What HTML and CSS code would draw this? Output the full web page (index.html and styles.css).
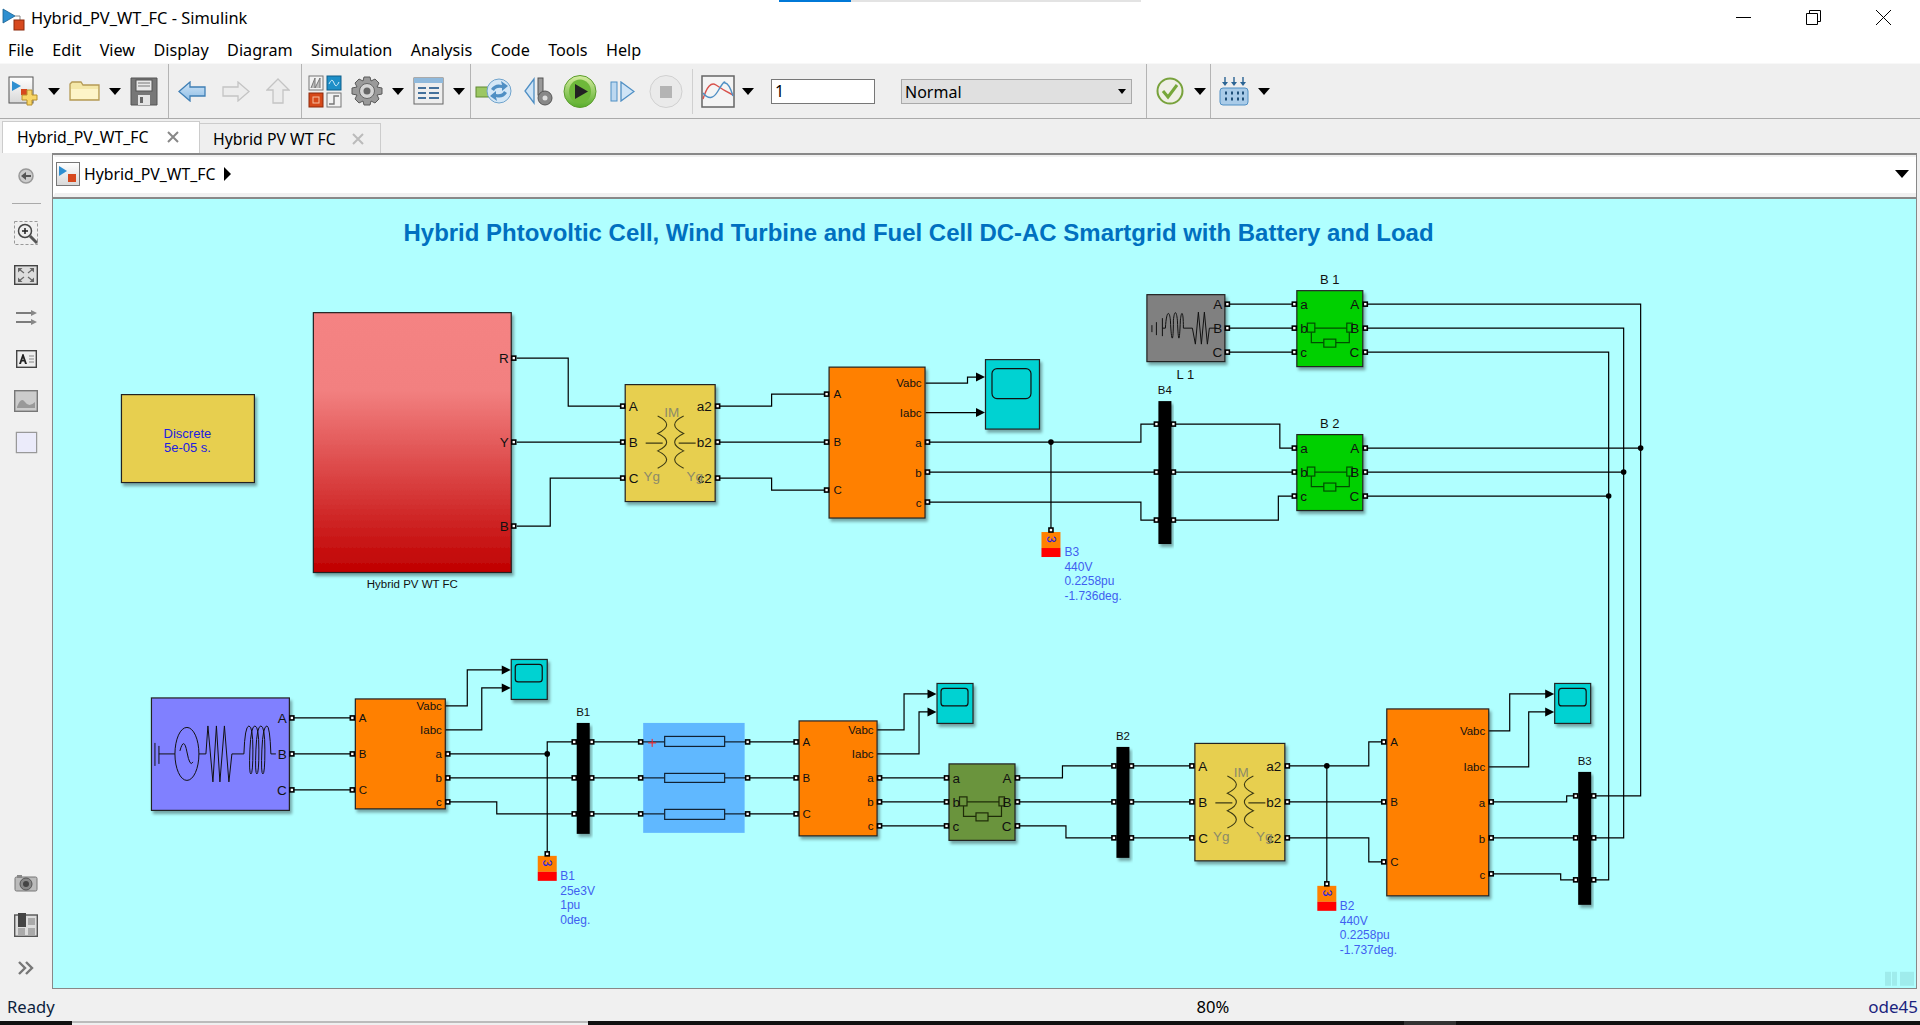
FILE: index.html
```html
<!doctype html>
<html>
  <head>
    <meta charset="utf-8">
    <title>Hybrid_PV_WT_FC - Simulink</title>
    <link rel="stylesheet" href="styles.css">
  </head>

  <body>
    <svg class="defs" width="0" height="0">
      <defs>
        <filter id="shade" x="-10%" y="-10%" width="130%" height="130%">
          <feDropShadow dx="2" dy="3" stdDeviation="1.6" flood-color="#000" flood-opacity="0.35"/>
        </filter>
        <linearGradient id="pvFill" x1="0" y1="0" x2="0" y2="1">
          <stop offset="0" stop-color="#f58383"/>
          <stop offset="0.3" stop-color="#f28080"/>
          <stop offset="1" stop-color="#c00000"/>
        </linearGradient>
        <linearGradient id="btnFill" x1="0" y1="0" x2="0" y2="1">
          <stop offset="0" stop-color="#ffffff"/>
          <stop offset="1" stop-color="#d8d8d8"/>
        </linearGradient>
        <linearGradient id="playFill" x1="0" y1="0" x2="0" y2="1">
          <stop offset="0" stop-color="#d5eca0"/>
          <stop offset="1" stop-color="#58ad2c"/>
        </linearGradient>
        <linearGradient id="blueArrow" x1="0" y1="0" x2="0" y2="1">
          <stop offset="0" stop-color="#cfe4f6"/>
          <stop offset="1" stop-color="#8dbde6"/>
        </linearGradient>
        <g id="port"><rect x="-2" y="-2" width="4" height="4" fill="#fff" stroke="#000" stroke-width="1.6"/></g>
        <polygon id="arrow" points="-9,-4.5 0,0 -9,4.5" fill="#000"/>
        <g id="breaker" fill="none" stroke="currentColor" stroke-width="1.2">
          <rect x="10.5" y="33" width="7.5" height="9"/>
          <rect x="50" y="33" width="5.5" height="9"/>
          <path d="M18 38H50M14.5 42V52.5H27M39 52.5H52.5V42"/>
          <rect x="27" y="49" width="12" height="8"/>
        </g>
        <g id="xfmrCoil" fill="none" stroke="#3c3a14" stroke-width="1.1">
          <path d="M32 32q18 8.700 0 17.400q18 8.700 0 17.400q18 8.700 0 17.400"/>
          <path d="M58 32q-18 8.700 0 17.400q-18 8.700 0 17.400q-18 8.700 0 17.400"/>
          <path d="M20 59H37M53 59H70"/>
        </g>
        <symbol id="modelMark" viewBox="0 0 24 24">
          <path d="M1 2L13 9L1 16Z" fill="#2f8fd0" stroke="#16608f" stroke-width="0.8"/>
          <path d="M13 9H18V13" fill="none" stroke="#888"/>
          <rect x="12" y="13" width="10" height="10" fill="#d7491e" stroke="#8c2a0c"/>
        </symbol>
      </defs>
    </svg>

    <header class="titlebar">
      <div class="loadbar"><span class="loadbar-fill"></span></div>
      <svg class="title-icon"><use href="#modelMark"/></svg>
      <span class="title-text">Hybrid_PV_WT_FC - Simulink</span>
      <div class="window-btns">
        <svg class="win-btn" viewBox="0 0 15 15"><path d="M0 7.500H15" stroke="#000" fill="none"/></svg>
        <svg class="win-btn" viewBox="0 0 15 15"><path d="M3.500 3V.5H14.500V11.500H12M.5 3.500H11.500V14.500H.5Z" stroke="#000" fill="none"/></svg>
        <svg class="win-btn" viewBox="0 0 15 15"><path d="M0 0L15 15M15 0L0 15" stroke="#000" fill="none"/></svg>
      </div>
    </header>

    <nav class="menubar">
      <span>File</span><span>Edit</span><span>View</span><span>Display</span><span>Diagram</span><span>Simulation</span><span>Analysis</span><span>Code</span><span>Tools</span><span>Help</span>
    </nav>

    <section class="toolbar">
      <div class="tool-group group-file">
        <svg class="ic ic-new" viewBox="0 0 31 30">
          <rect x="1" y="1" width="24" height="26" fill="url(#btnFill)" stroke="#555"/>
          <path d="M4 5L13 10L4 15Z" fill="#2f8fd0"/>
          <rect x="13" y="13" width="6" height="6" fill="#d7491e"/>
          <path d="M19 14h5v5h5v5h-5v5h-5v-5h-5v-5h5z" fill="#f8d667" stroke="#b8902a"/>
        </svg>
        <i class="caret"></i>
        <svg class="ic ic-folder" viewBox="0 0 31 20">
          <path d="M1 3V19H30V4H14L12 1H3Z" fill="#f4e7a8" stroke="#b59a55" stroke-width="1.3"/>
          <path d="M2 8H29V18H2Z" fill="#fdf4c8"/>
        </svg>
        <i class="caret"></i>
        <svg class="ic ic-save" viewBox="0 0 28 29">
          <path d="M1 1H27V28H1Z" fill="#777" stroke="#555"/>
          <rect x="6" y="3" width="16" height="11" fill="#e8e8e8" stroke="#555"/>
          <path d="M8 6H20M8 9H20" stroke="#777"/>
          <rect x="8" y="18" width="12" height="10" fill="#e4e4e4"/>
          <rect x="10" y="20" width="3" height="6" fill="#666"/>
        </svg>
      </div>

      <div class="tool-group group-nav">
        <svg class="ic ic-nav" viewBox="0 0 28 21"><path d="M1 10.500L12 1V6H27V15H12V20Z" fill="url(#blueArrow)" stroke="#3f7fb5" stroke-width="1.3"/></svg>
        <svg class="ic ic-nav" viewBox="0 0 28 21"><path d="M27 10.500L16 1V6H1V15H16V20Z" fill="#ececec" stroke="#c4c4c4" stroke-width="1.3"/></svg>
        <svg class="ic ic-up" viewBox="0 0 24 26"><path d="M12 1L23 12H17V25H7V12H1Z" fill="#ececec" stroke="#c4c4c4" stroke-width="1.3"/></svg>
      </div>

      <div class="tool-group group-lib">
        <svg class="ic ic-lib" viewBox="0 0 34 33">
          <rect x="1" y="1" width="14" height="14" fill="#f2f2f2" stroke="#777"/>
          <path d="M3 13L7 3V13M7 13L12 3V13" fill="#bbb" stroke="#777"/>
          <rect x="19" y="1" width="14" height="14" fill="#1e8fc8" stroke="#0e5f8a"/>
          <path d="M21 9Q24 2 26 8T31 7" fill="none" stroke="#cfeaf8"/>
          <rect x="1" y="18" width="14" height="14" fill="#d6491a" stroke="#8c2a0c"/>
          <rect x="5" y="22" width="6" height="6" fill="none" stroke="#f6c0a0"/>
          <rect x="19" y="18" width="14" height="14" fill="#f2f2f2" stroke="#777"/>
          <path d="M21 29H26V21H31" fill="none" stroke="#777" stroke-width="1.4"/>
        </svg>
        <svg class="ic ic-gear" viewBox="0 0 32 30">
          <path d="M13 1H19L20 5L24 3L28 7L26 11L31 12V18L26 19L28 23L24 27L20 25L19 29H13L12 25L8 27L4 23L6 19L1 18V12L6 11L4 7L8 3L12 5Z" fill="#9a9a9a" stroke="#5a5a5a"/>
          <circle cx="16" cy="15" r="7.500" fill="#d4d4d4" stroke="#666"/>
          <circle cx="16" cy="15" r="3.500" fill="#666"/>
        </svg>
        <i class="caret"></i>
        <svg class="ic ic-config" viewBox="0 0 31 28">
          <rect x="1" y="1" width="29" height="26" fill="#eee" stroke="#666"/>
          <rect x="1" y="1" width="29" height="5" fill="#8fb9dc"/>
          <path d="M5 11H13M16 11H26M5 16H13M16 16H26M5 21H13M16 21H26" stroke="#44719c" stroke-width="2"/>
        </svg>
        <i class="caret"></i>
      </div>

      <div class="tool-group group-sim">
        <svg class="ic ic-restart" viewBox="0 0 37 28">
          <rect x="1" y="10" width="14" height="10" fill="#9cc763" stroke="#618a33"/>
          <circle cx="24" cy="14" r="12" fill="#d4e7f6" stroke="#6fa3cc"/>
          <path d="M16 12Q20 6 27 8L26 4L33 9L27 14V11Q21 10 19 14ZM32 16Q28 22 21 20L22 24L15 19L21 14V17Q27 18 29 14Z" fill="#4f8fc4"/>
        </svg>
        <svg class="ic ic-stepback" viewBox="0 0 30 29">
          <path d="M10 2L1 14L10 26Z" fill="#cfe4f6" stroke="#4f8fc4" stroke-width="1.3"/>
          <rect x="14" y="1" width="5" height="17" fill="#999" stroke="#555"/>
          <circle cx="21" cy="21" r="7" fill="#888" stroke="#555"/>
          <circle cx="21" cy="21" r="2.500" fill="#ddd"/>
        </svg>
        <svg class="ic ic-round" viewBox="0 0 34 33">
          <ellipse cx="17" cy="16.500" rx="16" ry="16" fill="url(#playFill)" stroke="#5b9d2c"/>
          <ellipse cx="17" cy="16.500" rx="11" ry="12" fill="#6eb83a"/>
          <path d="M12 9L25 16.500L12 24Z" fill="#222"/>
        </svg>
        <svg class="ic ic-stepfwd" viewBox="0 0 25 21">
          <rect x="1" y="1" width="6" height="19" fill="#bcd8f0" stroke="#4f8fc4"/>
          <path d="M11 1L24 10.500L11 20Z" fill="#cfe4f6" stroke="#4f8fc4" stroke-width="1.3"/>
        </svg>
        <svg class="ic ic-round ic-stop" viewBox="0 0 34 33">
          <circle cx="17" cy="16.500" r="16" fill="#eaeaea" stroke="#d0d0d0"/>
          <rect x="11" y="11" width="12" height="12" fill="#b4b4b4"/>
        </svg>
        <span class="tool-sep"></span>
        <svg class="ic ic-round ic-scope" viewBox="0 0 34 33">
          <rect x="1" y="1" width="32" height="31" fill="#f4f4f4" stroke="#666" stroke-width="1.5"/>
          <path d="M2 24Q8 5 15 10T32 20" fill="none" stroke="#d8524c" stroke-width="1.4"/>
          <path d="M2 18Q10 28 17 16T24 8Q28 8 32 21" fill="none" stroke="#4f8fc4" stroke-width="1.4"/>
        </svg>
        <i class="caret caret-scope"></i>
        <input class="stop-time" type="text" value="1">
        <div class="sim-mode"><span>Normal</span><i class="caret caret-small"></i></div>
      </div>

      <div class="tool-group group-check">
        <svg class="ic ic-check" viewBox="0 0 28 28">
          <circle cx="14" cy="14" r="12.500" fill="#efefe6" stroke="#78a23c" stroke-width="2"/>
          <path d="M7 14L12 20L21 8" fill="none" stroke="#77a73a" stroke-width="3"/>
        </svg>
        <i class="caret"></i>
      </div>

      <div class="tool-group group-grid">
        <svg class="ic ic-grid" viewBox="0 0 30 30">
          <path d="M6 1V7M15 1V7M24 1V7" stroke="#2b6494" stroke-width="1.4"/>
          <path d="M3 6H9L6 10ZM12 6H18L15 10ZM21 6H27L24 10Z" fill="#2b6494"/>
          <rect x="1" y="12" width="28" height="17" rx="3" fill="#a9cbe8" stroke="#4f8fc4"/>
          <path d="M6 17H8M12 17H14M18 17H20M23 17H25M6 23H8M12 23H14M18 23H20M23 23H25" stroke="#1f4f78" stroke-width="3"/>
        </svg>
        <i class="caret"></i>
      </div>
    </section>

    <div class="tabbar">
      <div class="tab tab-active"><span>Hybrid_PV_WT_FC</span><svg class="tab-x" viewBox="0 0 12 12"><path d="M1 1L11 11M11 1L1 11"/></svg></div>
      <div class="tab"><span>Hybrid PV WT FC</span><svg class="tab-x" viewBox="0 0 12 12"><path d="M1 1L11 11M11 1L1 11"/></svg></div>
    </div>

    <div class="workspace">
      <aside class="palette">
        <svg class="pal-back" viewBox="0 0 16 16">
          <circle cx="8" cy="8" r="7" fill="#ccc" stroke="#999" stroke-width="1.500"/>
          <path d="M3 8L8 4V7H13V9H8V12Z" fill="#555"/>
        </svg>
        <span class="pal-sep"></span>
        <svg class="pal-ic pal-zoom" viewBox="0 0 24 24">
          <rect x=".5" y=".5" width="23" height="23" fill="none" stroke="#999" stroke-dasharray="3 2"/>
          <circle cx="11" cy="10" r="6.500" fill="#eee" stroke="#444" stroke-width="1.500"/>
          <path d="M8 10H14M11 7V13" stroke="#222" stroke-width="1.500"/>
          <path d="M16 15L23 22" stroke="#555" stroke-width="3"/>
        </svg>
        <svg class="pal-ic pal-fit" viewBox="0 0 24 20">
          <rect x=".7" y=".7" width="22.600" height="18.600" fill="#ddd" stroke="#444" stroke-width="1.400"/>
          <path d="M4 3H8.500L4 7.500ZM20 3H15.500L20 7.500ZM4 17H8.500L4 12.500ZM20 17H15.500L20 12.500Z" fill="#666"/>
          <path d="M5 4L10 8M19 4L14 8M5 16L10 12M19 16L14 12" stroke="#666" stroke-width="1.200"/>
        </svg>
        <svg class="pal-ic pal-lines" viewBox="0 0 21 15">
          <path d="M0 3H18M0 12H18" stroke="#555" stroke-width="1.400"/>
          <path d="M15 0L21 3L15 6ZM15 9L21 12L15 15Z" fill="#888"/>
        </svg>
        <svg class="pal-ic pal-note" viewBox="0 0 21 18">
          <rect x=".7" y=".7" width="19.600" height="16.600" fill="#eee" stroke="#444" stroke-width="1.400"/>
          <path d="M3 14L6.500 4H7.500L11 14H9L8.200 11.500H5.800L5 14ZM6.400 10H7.600L7 8Z" fill="#222"/>
          <path d="M13 6H18M13 9H18M13 12H18" stroke="#888"/>
        </svg>
        <svg class="pal-ic pal-image" viewBox="0 0 24 22">
          <rect x=".7" y=".7" width="22.600" height="20.600" fill="#ccc" stroke="#777" stroke-width="1.400"/>
          <path d="M3 17Q7 6 11 12T21 12V18H3Z" fill="#999"/>
        </svg>
        <span class="pal-rect"></span>
        <span class="pal-fill"></span>
        <svg class="pal-ic pal-camera" viewBox="0 0 24 18">
          <rect x="1" y="3" width="22" height="14" rx="1.500" fill="#bbb" stroke="#777"/>
          <rect x="3" y="1" width="5" height="3" fill="#888"/>
          <circle cx="12" cy="10" r="6" fill="#888" stroke="#555"/>
          <circle cx="12" cy="10" r="3" fill="#444"/>
        </svg>
        <svg class="pal-ic pal-browser" viewBox="0 0 24 24">
          <rect x=".7" y="2" width="22.600" height="21.300" fill="#ddd" stroke="#555" stroke-width="1.400"/>
          <rect x="4" y="0" width="8" height="14" fill="#444"/>
          <rect x="4" y="15" width="7" height="7" fill="#aaa"/>
          <rect x="14" y="5" width="7" height="7" fill="#aaa"/>
          <rect x="14" y="15" width="7" height="7" fill="#aaa"/>
        </svg>
        <svg class="pal-ic pal-more" viewBox="0 0 16 14">
          <path d="M1 1L7 7L1 13M8 1L14 7L8 13" fill="none" stroke="#777" stroke-width="2.400"/>
        </svg>
      </aside>

      <main class="editor">
        <div class="crumbbar">
          <svg class="crumb-icon" viewBox="0 0 24 24">
            <rect x=".5" y=".5" width="23" height="23" fill="url(#btnFill)" stroke="#777"/>
            <path d="M3 4L11 9L3 14Z" fill="#2f8fd0"/>
            <rect x="12" y="12" width="8" height="8" fill="#d7491e"/>
          </svg>
          <span class="crumb-text">Hybrid_PV_WT_FC</span>
          <i class="crumb-next"></i>
          <i class="crumb-menu"></i>
        </div>

        <svg class="canvas" viewBox="53 199 1864 789">
          <text class="sheet-title" x="919" y="241">Hybrid Phtovoltic Cell, Wind Turbine and Fuel Cell DC-AC Smartgrid with Battery and Load</text>

          <!-- wires -->
          <g class="wires">
            <path d="M517 358H568.500V406H623M517 442H623M517 526H550.500V478H623"/>
            <path d="M718 406H772V394H827M718 442H827M718 478H772V490H827"/>
            <path d="M926 383H968V377H977M926 412.500H977"/>
            <path d="M928 442H1141.500V424H1157M928 472H1157M928 502H1141.500V520H1157M1051.500 442V528"/>
            <path d="M1174 424H1280.500V448H1295M1174 472H1295M1174 520H1279V496H1295"/>
            <path d="M1228 304H1295M1228 328H1295M1228 352H1295"/>
            <path d="M1366 304H1641.500V796H1595M1366 328H1624.500V838H1595M1366 352H1609.500V880H1595"/>
            <path d="M1366 448H1641.500M1366 472H1624.500M1366 496H1609.500"/>
            <path d="M292 718H352M292 754H352M292 790H352"/>
            <path d="M445 706H467.500V670H503M445 730H482V688H503"/>
            <path d="M448 754H547.500V742H574M448 778H574M448 802H497V814H574M547.500 754V853"/>
            <path d="M592 742H641M592 778H641M592 814H641"/>
            <path d="M748 742H796M748 778H796M748 814H796"/>
            <path d="M877 730H904.500V694H929M877 754H919.500V712H929"/>
            <path d="M880 778H947M880 802H947M880 826H947"/>
            <path d="M1018 778H1063V766H1114M1018 802H1114M1018 826H1066.500V838H1114"/>
            <path d="M1132 766H1192M1132 802H1192M1132 838H1192"/>
            <path d="M1288 766H1369.500V742H1385M1288 802H1385M1288 838H1369.500V862H1385M1327.500 766V883"/>
            <path d="M1489 731H1510.500V694H1547M1489 767H1529.500V712H1547"/>
            <path d="M1492 802H1567.500V796H1577M1492 838H1577M1492 874H1561.500V880H1577"/>
          </g>
          <g class="dots">
            <circle cx="1051.500" cy="442" r="2.800"/>
            <circle cx="1641.500" cy="448" r="2.800"/>
            <circle cx="1624.500" cy="472" r="2.800"/>
            <circle cx="1609.500" cy="496" r="2.800"/>
            <circle cx="547.500" cy="754" r="2.800"/>
            <circle cx="1327.500" cy="766" r="2.800"/>
          </g>

          <!-- powergui -->
          <rect class="block fill-yellow" x="121.500" y="394.500" width="133" height="88"/>
          <text class="lbl lbl-blue mid" x="187.500" y="438">Discrete</text>
          <text class="lbl lbl-blue mid" x="187.500" y="452">5e-05 s.</text>

          <!-- PV / WT / FC subsystem -->
          <rect class="block" fill="url(#pvFill)" x="313.500" y="312.500" width="198" height="260"/>
          <text class="lbl end" x="509" y="363">R</text>
          <text class="lbl end" x="509" y="447">Y</text>
          <text class="lbl end" x="509" y="531">B</text>
          <text class="lbl-small mid" x="412.500" y="588">Hybrid PV WT FC</text>

          <!-- transformer top -->
          <rect class="block fill-yellow" x="625.500" y="384.500" width="90" height="117"/>
          <use href="#xfmrCoil" x="626" y="384"/>
          <text class="lbl" x="629" y="411">A</text>
          <text class="lbl" x="629" y="447">B</text>
          <text class="lbl" x="629" y="483">C</text>
          <text class="lbl end" x="712" y="411">a2</text>
          <text class="lbl end" x="712" y="447">b2</text>
          <text class="lbl end" x="712" y="483">c2</text>
          <text class="lbl lbl-grey mid" x="672" y="417">IM</text>
          <text class="lbl lbl-grey mid" x="652" y="481">Yg</text>
          <text class="lbl lbl-grey mid" x="695" y="481">Yg</text>

          <!-- VI measurement top -->
          <rect class="block fill-orange" x="829.500" y="367" width="96" height="151"/>
          <text class="lbl-mini" x="834" y="398">A</text>
          <text class="lbl-mini" x="834" y="446">B</text>
          <text class="lbl-mini" x="834" y="494">C</text>
          <text class="lbl-mini end" x="922" y="387">Vabc</text>
          <text class="lbl-mini end" x="922" y="417">Iabc</text>
          <text class="lbl-mini end" x="922" y="447">a</text>
          <text class="lbl-mini end" x="922" y="477">b</text>
          <text class="lbl-mini end" x="922" y="507">c</text>

          <rect class="block fill-scope" x="986" y="359.500" width="54" height="69.500"/>
          <rect class="scope-face" x="992.500" y="368.500" width="39" height="30" rx="5"/>
          <use href="#arrow" x="985.500" y="377"/>
          <use href="#arrow" x="985.500" y="412.500"/>

          <!-- bus B4 -->
          <rect class="bus" x="1159" y="401" width="13" height="143"/>
          <text class="lbl-small mid" x="1165.500" y="394">B4</text>

          <!-- load source L 1 -->
          <rect class="block fill-grey" x="1147.500" y="294.500" width="78" height="67"/>
          <g class="stroke-dark">
            <path d="M1152.500 325V332M1157 322V335M1163 318V336M1163 328H1166"/>
            <path d="M1166 328C1167 310 1170 310 1171 320C1172 344 1174 344 1174 320C1175 310 1177 310 1178 320C1179 344 1180 344 1181 320C1182 310 1184 310 1184 328H1193L1196 344L1199 312L1202 344L1205 312L1208 344L1210 328H1218"/>
          </g>
          <text class="lbl end" x="1223" y="309">A</text>
          <text class="lbl end" x="1223" y="333">B</text>
          <text class="lbl end" x="1223" y="357">C</text>
          <text class="lbl-wide mid" x="1186" y="379">L 1</text>

          <!-- breakers -->
          <rect class="block fill-green" x="1297.500" y="290.500" width="66" height="76"/>
          <use class="breaker-green" href="#breaker" x="1297.500" y="290"/>
          <text class="lbl" x="1301" y="309">a</text>
          <text class="lbl" x="1301" y="333">b</text>
          <text class="lbl" x="1301" y="357">c</text>
          <text class="lbl end" x="1360" y="309">A</text>
          <text class="lbl end" x="1360" y="333">B</text>
          <text class="lbl end" x="1360" y="357">C</text>
          <text class="lbl-wide mid" x="1330.500" y="284">B 1</text>

          <rect class="block fill-green" x="1297.500" y="434.500" width="66" height="76"/>
          <use class="breaker-green" href="#breaker" x="1297.500" y="434"/>
          <text class="lbl" x="1301" y="453">a</text>
          <text class="lbl" x="1301" y="477">b</text>
          <text class="lbl" x="1301" y="501">c</text>
          <text class="lbl end" x="1360" y="453">A</text>
          <text class="lbl end" x="1360" y="477">B</text>
          <text class="lbl end" x="1360" y="501">C</text>
          <text class="lbl-wide mid" x="1330.500" y="428">B 2</text>

          <!-- three-phase source -->
          <rect class="block fill-violet" x="151.500" y="698" width="138" height="112.500"/>
          <g class="stroke-dark">
            <path d="M155 743V766M159 746V764M159 754H175"/>
            <ellipse cx="187" cy="754" rx="12" ry="26.500"/>
            <path d="M180 751Q184 736 187 752T193 762"/>
            <path d="M199 754H206L208 726L213 782L216.500 726L220 782L224.500 726L229 782L232 754H244"/>
            <path d="M244 754Q245 726 249 726Q253 726 253 750Q253 774 251 774Q249 774 250 750Q251 726 255 726Q259 726 259 750Q259 774 257 774Q255 774 256 750Q257 726 261 726Q265 726 265 750Q265 774 263 774Q261 774 262 750Q263 726 267 726Q270 726 271 754H276"/>
          </g>
          <text class="lbl end" x="287" y="723">A</text>
          <text class="lbl end" x="287" y="759">B</text>
          <text class="lbl end" x="287" y="795">C</text>

          <!-- VI measurement B1 -->
          <rect class="block fill-orange" x="355.500" y="699" width="90" height="110"/>
          <text class="lbl-mini" x="359" y="722">A</text>
          <text class="lbl-mini" x="359" y="758">B</text>
          <text class="lbl-mini" x="359" y="794">C</text>
          <text class="lbl-mini end" x="442" y="710">Vabc</text>
          <text class="lbl-mini end" x="442" y="734">Iabc</text>
          <text class="lbl-mini end" x="442" y="758">a</text>
          <text class="lbl-mini end" x="442" y="782">b</text>
          <text class="lbl-mini end" x="442" y="806">c</text>

          <rect class="block fill-scope" x="511.500" y="659.500" width="36" height="40"/>
          <rect class="scope-face" x="515.500" y="664.500" width="27" height="17.500" rx="3"/>
          <use href="#arrow" x="511" y="670"/>
          <use href="#arrow" x="511" y="688"/>

          <rect class="bus" x="577" y="723" width="13" height="111"/>
          <text class="lbl-small mid" x="583.500" y="716">B1</text>

          <!-- line block -->
          <rect class="fill-line" x="643.500" y="723" width="101.500" height="110"/>
          <g class="line-r">
            <path d="M641 742H665M725 742H748M641 778H665M725 778H748M641 814H665M725 814H748"/>
            <rect x="665" y="736.500" width="60" height="10"/>
            <rect x="665" y="773.500" width="60" height="9"/>
            <rect x="665" y="809.500" width="60" height="10"/>
          </g>
          <path class="plus-red" d="M648.500 743H656.500M652.500 739V747"/>

          <!-- VI measurement after line -->
          <rect class="block fill-orange" x="799.500" y="721" width="78" height="115"/>
          <text class="lbl-mini" x="803" y="746">A</text>
          <text class="lbl-mini" x="803" y="782">B</text>
          <text class="lbl-mini" x="803" y="818">C</text>
          <text class="lbl-mini end" x="874" y="734">Vabc</text>
          <text class="lbl-mini end" x="874" y="758">Iabc</text>
          <text class="lbl-mini end" x="874" y="782">a</text>
          <text class="lbl-mini end" x="874" y="806">b</text>
          <text class="lbl-mini end" x="874" y="830">c</text>

          <rect class="block fill-scope" x="937.500" y="683.500" width="36" height="40"/>
          <rect class="scope-face" x="941.500" y="688.500" width="27" height="17.500" rx="3"/>
          <use href="#arrow" x="937" y="694"/>
          <use href="#arrow" x="937" y="712"/>

          <!-- breaker dark -->
          <rect class="block fill-moss" x="949.500" y="764" width="66" height="76.500"/>
          <use class="breaker-dark" href="#breaker" x="949.500" y="764"/>
          <text class="lbl" x="953" y="783">a</text>
          <text class="lbl" x="953" y="807">b</text>
          <text class="lbl" x="953" y="831">c</text>
          <text class="lbl end" x="1012" y="783">A</text>
          <text class="lbl end" x="1012" y="807">B</text>
          <text class="lbl end" x="1012" y="831">C</text>

          <rect class="bus" x="1117" y="747" width="13" height="111"/>
          <text class="lbl-small mid" x="1123.500" y="740">B2</text>

          <!-- transformer bottom -->
          <rect class="block fill-yellow" x="1195.500" y="743.500" width="90" height="117.500"/>
          <use href="#xfmrCoil" x="1196" y="744"/>
          <text class="lbl" x="1199" y="771">A</text>
          <text class="lbl" x="1199" y="807">B</text>
          <text class="lbl" x="1199" y="843">C</text>
          <text class="lbl end" x="1282" y="771">a2</text>
          <text class="lbl end" x="1282" y="807">b2</text>
          <text class="lbl end" x="1282" y="843">c2</text>
          <text class="lbl lbl-grey mid" x="1242" y="777">IM</text>
          <text class="lbl lbl-grey mid" x="1222" y="841">Yg</text>
          <text class="lbl lbl-grey mid" x="1265" y="841">Yg</text>

          <!-- VI measurement right -->
          <rect class="block fill-orange" x="1387.500" y="709" width="102" height="187"/>
          <text class="lbl-mini" x="1391" y="746">A</text>
          <text class="lbl-mini" x="1391" y="806">B</text>
          <text class="lbl-mini" x="1391" y="866">C</text>
          <text class="lbl-mini end" x="1486" y="735">Vabc</text>
          <text class="lbl-mini end" x="1486" y="771">Iabc</text>
          <text class="lbl-mini end" x="1486" y="807">a</text>
          <text class="lbl-mini end" x="1486" y="843">b</text>
          <text class="lbl-mini end" x="1486" y="879">c</text>

          <rect class="block fill-scope" x="1555.500" y="683.500" width="36" height="40"/>
          <rect class="scope-face" x="1559.500" y="688.500" width="27.500" height="17.500" rx="3"/>
          <use href="#arrow" x="1555" y="694"/>
          <use href="#arrow" x="1555" y="712"/>

          <rect class="bus" x="1579" y="772" width="13" height="133"/>
          <text class="lbl-small mid" x="1585.500" y="765">B3</text>

          <!-- bus measurements -->
          <rect class="meas-top" x="1042" y="532" width="19" height="16"/>
          <rect class="meas-bot" x="1042" y="548" width="19" height="9"/>
          <text class="meas-num" transform="translate(1047.500 536) rotate(90)">3</text>
          <text class="lbl-meas" x="1065" y="556">B3</text>
          <text class="lbl-meas" x="1065" y="571">440V</text>
          <text class="lbl-meas" x="1065" y="585">0.2258pu</text>
          <text class="lbl-meas" x="1065" y="600">-1.736deg.</text>

          <rect class="meas-top" x="538" y="856" width="19" height="16"/>
          <rect class="meas-bot" x="538" y="872" width="19" height="9"/>
          <text class="meas-num" transform="translate(543.500 860) rotate(90)">3</text>
          <text class="lbl-meas" x="560.500" y="880">B1</text>
          <text class="lbl-meas" x="560.500" y="895">25e3V</text>
          <text class="lbl-meas" x="560.500" y="909">1pu</text>
          <text class="lbl-meas" x="560.500" y="924">0deg.</text>

          <rect class="meas-top" x="1318" y="886" width="19" height="16"/>
          <rect class="meas-bot" x="1318" y="902" width="19" height="9"/>
          <text class="meas-num" transform="translate(1323.500 890) rotate(90)">3</text>
          <text class="lbl-meas" x="1340.500" y="910">B2</text>
          <text class="lbl-meas" x="1340.500" y="925">440V</text>
          <text class="lbl-meas" x="1340.500" y="939">0.2258pu</text>
          <text class="lbl-meas" x="1340.500" y="954">-1.737deg.</text>

          <!-- ports -->
          <use href="#port" x="514" y="358"/><use href="#port" x="514" y="442"/><use href="#port" x="514" y="526"/>
          <use href="#port" x="623" y="406"/><use href="#port" x="623" y="442"/><use href="#port" x="623" y="478"/>
          <use href="#port" x="718" y="406"/><use href="#port" x="718" y="442"/><use href="#port" x="718" y="478"/>
          <use href="#port" x="827" y="394"/><use href="#port" x="827" y="442"/><use href="#port" x="827" y="490"/>
          <use href="#port" x="928" y="442"/><use href="#port" x="928" y="472"/><use href="#port" x="928" y="502"/>
          <use href="#port" x="1157" y="424"/><use href="#port" x="1157" y="472"/><use href="#port" x="1157" y="520"/>
          <use href="#port" x="1174" y="424"/><use href="#port" x="1174" y="472"/><use href="#port" x="1174" y="520"/>
          <use href="#port" x="1228" y="304"/><use href="#port" x="1228" y="328"/><use href="#port" x="1228" y="352"/>
          <use href="#port" x="1295" y="304"/><use href="#port" x="1295" y="328"/><use href="#port" x="1295" y="352"/>
          <use href="#port" x="1366" y="304"/><use href="#port" x="1366" y="328"/><use href="#port" x="1366" y="352"/>
          <use href="#port" x="1295" y="448"/><use href="#port" x="1295" y="472"/><use href="#port" x="1295" y="496"/>
          <use href="#port" x="1366" y="448"/><use href="#port" x="1366" y="472"/><use href="#port" x="1366" y="496"/>
          <use href="#port" x="1051.500" y="530"/>
          <use href="#port" x="292" y="718"/><use href="#port" x="292" y="754"/><use href="#port" x="292" y="790"/>
          <use href="#port" x="352.500" y="718"/><use href="#port" x="352.500" y="754"/><use href="#port" x="352.500" y="790"/>
          <use href="#port" x="448" y="754"/><use href="#port" x="448" y="778"/><use href="#port" x="448" y="802"/>
          <use href="#port" x="574.500" y="742"/><use href="#port" x="574.500" y="778"/><use href="#port" x="574.500" y="814"/>
          <use href="#port" x="592" y="742"/><use href="#port" x="592" y="778"/><use href="#port" x="592" y="814"/>
          <use href="#port" x="641" y="742"/><use href="#port" x="641" y="778"/><use href="#port" x="641" y="814"/>
          <use href="#port" x="748" y="742"/><use href="#port" x="748" y="778"/><use href="#port" x="748" y="814"/>
          <use href="#port" x="547.500" y="854"/>
          <use href="#port" x="796.500" y="742"/><use href="#port" x="796.500" y="778"/><use href="#port" x="796.500" y="814"/>
          <use href="#port" x="880" y="778"/><use href="#port" x="880" y="802"/><use href="#port" x="880" y="826"/>
          <use href="#port" x="947" y="778"/><use href="#port" x="947" y="802"/><use href="#port" x="947" y="826"/>
          <use href="#port" x="1018" y="778"/><use href="#port" x="1018" y="802"/><use href="#port" x="1018" y="826"/>
          <use href="#port" x="1114.500" y="766"/><use href="#port" x="1114.500" y="802"/><use href="#port" x="1114.500" y="838"/>
          <use href="#port" x="1132" y="766"/><use href="#port" x="1132" y="802"/><use href="#port" x="1132" y="838"/>
          <use href="#port" x="1192.500" y="766"/><use href="#port" x="1192.500" y="802"/><use href="#port" x="1192.500" y="838"/>
          <use href="#port" x="1288" y="766"/><use href="#port" x="1288" y="802"/><use href="#port" x="1288" y="838"/>
          <use href="#port" x="1327.500" y="884"/>
          <use href="#port" x="1384.500" y="742"/><use href="#port" x="1384.500" y="802"/><use href="#port" x="1384.500" y="862"/>
          <use href="#port" x="1492" y="802"/><use href="#port" x="1492" y="838"/><use href="#port" x="1492" y="874"/>
          <use href="#port" x="1576.500" y="796"/><use href="#port" x="1576.500" y="838"/><use href="#port" x="1576.500" y="880"/>
          <use href="#port" x="1594.500" y="796"/><use href="#port" x="1594.500" y="838"/><use href="#port" x="1594.500" y="880"/>

          <!-- corner overview marks -->
          <g class="corner-mark">
            <rect x="1886" y="972" width="6" height="14"/>
            <rect x="1893" y="972" width="5" height="14"/>
            <rect x="1901" y="972" width="14" height="14"/>
          </g>
        </svg>
      </main>
      <span class="edge"></span>
    </div>

    <footer class="statusbar">
      <span class="status-ready">Ready</span>
      <span class="status-zoom">80%</span>
      <span class="status-solver">ode45</span>
    </footer>

    <div class="taskbar">
      <span class="task-open"></span>
      <span class="task-dark"></span>
    </div>
  </body>
</html>
```

FILE: styles.css
```css
*,
*::before,
*::after {
  box-sizing: border-box;
  margin: 0;
  padding: 0;
}

html,
body {
  width: 1920px;
  height: 1025px;
  overflow: hidden;
}

body {
  font-family: "Noto Sans", sans-serif;
  color: #000;
  background-color: #fff;
  display: flex;
  flex-direction: column;
}

.defs {
  position: absolute;
}

/* title and menu */
.titlebar {
  height: 35px;
  flex: none;
  display: flex;
  align-items: center;
  position: relative;
  background-color: #fff;
}

.loadbar {
  position: absolute;
  left: 779px;
  top: 0;
  width: 362px;
  height: 2px;
  background-color: #e3e3e3;
}

.loadbar-fill {
  display: block;
  width: 72px;
  height: 2px;
  background-color: #0078d7;
}

.title-icon {
  width: 24px;
  height: 24px;
  margin: 3px 0 0 2px;
}

.title-text {
  font-size: 16.4px;
  margin-left: 5px;
}

.window-btns {
  margin-left: auto;
  display: flex;
  gap: 55px;
  padding-right: 29px;
}

.win-btn {
  width: 15px;
  height: 15px;
}

.menubar {
  height: 28px;
  flex: none;
  display: flex;
  align-items: center;
  gap: 18.4px;
  padding: 2px 0 0 8px;
  font-size: 16.2px;
  background-color: #fff;
}

/* toolbar */
.toolbar {
  height: 56px;
  flex: none;
  display: flex;
  background-color: #efefef;
  border-top: 1px solid #f8f8f8;
  border-bottom: 1px solid #aaa;
}

.tool-group {
  display: flex;
  align-items: center;
  border-right: 1px solid #b4b4b4;
  gap: 9px;
}

.group-file { width: 169px; padding-left: 8px; }
.group-nav { width: 133px; padding-left: 9px; gap: 16px; }
.group-lib { width: 169px; padding-left: 6px; }
.group-sim { width: 676px; padding-left: 4px; gap: 0; }
.group-check { width: 64px; padding-left: 9px; gap: 10px; }
.group-grid { border-right: none; padding-left: 8px; }

.ic {
  display: block;
  flex: none;
}

.ic-new { width: 31px; height: 30px; }
.ic-folder { width: 31px; height: 20px; }
.ic-save { width: 28px; height: 29px; }
.ic-nav { width: 28px; height: 21px; }
.ic-up { width: 24px; height: 26px; }
.ic-lib { width: 34px; height: 33px; }
.ic-gear { width: 32px; height: 30px; }
.ic-config { width: 31px; height: 28px; }
.ic-restart { width: 37px; height: 28px; }
.ic-stepback { width: 30px; height: 29px; margin-left: 12px; }
.ic-round { width: 34px; height: 33px; margin-left: 9px; }
.ic-stepfwd { width: 25px; height: 21px; margin-left: 13px; }
.ic-stop { margin-left: 14px; }
.ic-scope { margin-left: 8px; }
.ic-check { width: 28px; height: 28px; }
.ic-grid { width: 30px; height: 30px; }

.tool-sep {
  width: 1px;
  height: 45px;
  margin-left: 9px;
  background-color: #d0d0d0;
}

.caret {
  flex: none;
  width: 0;
  height: 0;
  border-left: 6px solid transparent;
  border-right: 6px solid transparent;
  border-top: 7px solid #000;
}

.caret-scope {
  margin-left: 7px;
}

.caret-small {
  border-left-width: 4px;
  border-right-width: 4px;
  border-top-width: 5px;
}

.stop-time {
  width: 104px;
  height: 25px;
  margin-left: 17px;
  border: 1px solid #777;
  background-color: #fff;
  font-family: inherit;
  font-size: 16px;
  padding-left: 3px;
  color: #000;
}

.sim-mode {
  width: 231px;
  height: 25px;
  margin-left: 26px;
  border: 1px solid #aaa;
  background-color: #e0e0e0;
  display: flex;
  align-items: center;
  justify-content: space-between;
  padding: 1px 5px 0 3px;
  font-size: 16px;
}

/* tabs */
.tabbar {
  height: 34px;
  flex: none;
  display: flex;
  align-items: flex-end;
  padding-left: 2px;
  background-color: #efefef;
}

.tab {
  height: 30px;
  width: 181px;
  display: flex;
  align-items: center;
  justify-content: space-between;
  padding: 0 16px 0 13px;
  border: 1px solid #ccc;
  border-bottom: none;
  border-left: none;
  font-size: 15.8px;
}

.tab-active {
  height: 32px;
  width: 198px;
  padding: 0 20px 2px 14px;
  background-color: #fff;
  border-left: 1px solid #ccc;
}

.tab-x {
  width: 12px;
  height: 12px;
  fill: none;
  stroke: #bbb;
  stroke-width: 2;
}

.tab-active .tab-x {
  stroke: #888;
}

/* main area */
.workspace {
  height: 836px;
  flex: none;
  display: flex;
  background-color: #f0f0f0;
}

.palette {
  width: 52px;
  flex: none;
  display: flex;
  flex-direction: column;
  align-items: center;
  padding-top: 15px;
  background-color: #f0f0f0;
}

.pal-back { width: 16px; height: 16px; }

.pal-sep {
  width: 29px;
  height: 1px;
  margin-top: 19px;
  background-color: #aaa;
}

.pal-ic {
  display: block;
  flex: none;
}

.pal-zoom { width: 24px; height: 24px; margin-top: 17px; }
.pal-fit { width: 24px; height: 20px; margin-top: 20px; }
.pal-lines { width: 21px; height: 15px; margin-top: 25px; }
.pal-note { width: 21px; height: 18px; margin-top: 25px; }
.pal-image { width: 24px; height: 22px; margin-top: 22px; }

.pal-rect {
  width: 21px;
  height: 21px;
  margin-top: 20px;
  background-color: #ebebfa;
  border: 1px solid #999;
  box-shadow: 0 0 1px #777;
  flex: none;
}

.pal-fill { flex: 1; }

.pal-camera { width: 24px; height: 18px; }
.pal-browser { width: 24px; height: 24px; margin-top: 21px; }
.pal-more { width: 16px; height: 14px; margin: 24px 0 14px; }

.editor {
  width: 1865px;
  flex: none;
  display: flex;
  flex-direction: column;
  border-left: 1px solid #888;
  border-top: 2px solid #888;
  border-right: 1px solid #888;
  border-bottom: 1px solid #888;
}

.edge {
  flex: 1;
}

.crumbbar {
  height: 42px;
  flex: none;
  display: flex;
  align-items: center;
  padding: 0 0 2px 1px;
  background-color: #fff;
  border-top: 2px solid #f0f0f0;
  border-bottom: 4px solid #f0f0f0;
  border-left: 2px solid #fff;
  font-size: 15.8px;
}

.crumb-icon {
  width: 24px;
  height: 24px;
  flex: none;
}

.crumb-text {
  margin-left: 4px;
}

.crumb-next {
  margin-left: 8px;
  width: 0;
  height: 0;
  border-top: 7px solid transparent;
  border-bottom: 7px solid transparent;
  border-left: 7px solid #000;
}

.crumb-menu {
  margin-left: auto;
  margin-right: 7px;
  width: 0;
  height: 0;
  border-left: 7px solid transparent;
  border-right: 7px solid transparent;
  border-top: 8px solid #000;
}

.canvas {
  display: block;
  width: 1863px;
  height: 789px;
  border-top: 2px solid #888;
  background-color: #b0ffff;
  box-sizing: content-box;
}

/* diagram */
.canvas text {
  font-family: "Liberation Sans", Arial, sans-serif;
  fill: #111;
}

.sheet-title {
  font-size: 24px;
  font-weight: bold;
  text-anchor: middle;
  fill: #0070c0 !important;
}

.wires path {
  fill: none;
  stroke: #000;
  stroke-width: 1.2;
}

.dots circle {
  fill: #000;
}

.block {
  stroke: #222;
  stroke-width: 1.2;
  filter: url(#shade);
}

.fill-yellow { fill: #e7cf50; }
.fill-orange { fill: #ff8000; }
.fill-scope { fill: #00d2d2; }
.fill-grey { fill: #808080; }
.fill-green { fill: #00d000; }
.fill-moss { fill: #6b943c; }
.fill-violet { fill: #8080ff; }
.fill-line { fill: #60b8ff; }

.scope-face {
  fill: #00d2d2;
  stroke: #111;
  stroke-width: 1.2;
}

.bus {
  fill: #000;
  filter: url(#shade);
}

.stroke-dark {
  fill: none;
  stroke: #111;
  stroke-width: 1;
}

.line-r {
  fill: #60b8ff;
  stroke: #123;
  stroke-width: 1.2;
}

.plus-red {
  fill: none;
  stroke: #ff2020;
  stroke-width: 1;
}

.breaker-green { color: #004d00; }
.breaker-dark { color: #1f2c08; }

.lbl { font-size: 13.5px; }
.lbl-mini { font-size: 11.5px; }
.lbl-small { font-size: 11.5px; }
.lbl-wide { font-size: 13px; }

.mid { text-anchor: middle; }
.end { text-anchor: end; }

.canvas .lbl-blue {
  fill: #2020e0;
  font-size: 13px;
}

.canvas .lbl-grey {
  fill: #8a8a6a;
  font-size: 13.5px;
}

.canvas .lbl-meas {
  fill: #4060f0;
  font-size: 12px;
}

.meas-top { fill: #ff8000; }
.meas-bot { fill: #ff0000; }

.canvas .meas-num {
  fill: #2020e0;
  font-size: 12px;
}

.corner-mark rect {
  fill: #9fecec;
}

/* bottom */
.statusbar {
  height: 32px;
  flex: none;
  display: flex;
  align-items: center;
  background-color: #f0f0f0;
  font-size: 16.6px;
  padding: 3px 2px 0 7px;
}

.status-ready { width: 1156px; color: #0d1f3c; }
.status-zoom { width: 100px; text-align: center; }
.status-solver { flex: 1; text-align: right; color: #1a237e; font-size: 17px; }

.taskbar {
  height: 4px;
  flex: none;
  background-color: #111;
  position: relative;
}

.task-open {
  position: absolute;
  left: 72px;
  top: 0;
  width: 516px;
  height: 4px;
  background-color: #efefef;
  border-top: 2px solid #bbb;
}

.task-dark {
  position: absolute;
  left: 1404px;
  top: 0;
  width: 52px;
  height: 4px;
  background-color: #333;
}
```
